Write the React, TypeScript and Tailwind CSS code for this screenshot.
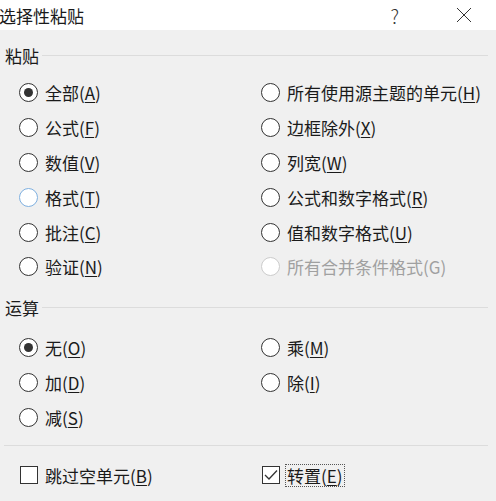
import React from "react";

const font = '"Microsoft YaHei", "Noto Sans CJK SC", "Noto Sans", sans-serif';

function Label({ text, k, disabled }: { text: string; k?: string; disabled?: boolean }) {
  if (!k) return <span>{text}</span>;
  return (
    <span>
      {text}(<span className={disabled ? "" : "underline underline-offset-2 decoration-1"}>{k}</span>)
    </span>
  );
}

function Radio({
  text,
  k,
  checked,
  focus,
  disabled,
}: {
  text: string;
  k: string;
  checked?: boolean;
  focus?: boolean;
  disabled?: boolean;
}) {
  const border = disabled ? "border-[#cccccc]" : focus ? "border-[#7fb0e0]" : "border-[#333333]";
  return (
    <div className="flex h-[34.8px] items-center">
      <div
        className={`flex h-[19px] w-[19px] items-center justify-center rounded-full border bg-white ${border}`}
      >
        {checked && <div className="h-[9px] w-[9px] rounded-full bg-[#333333]" />}
      </div>
      <div className={`ml-[7px] text-[17px] leading-none ${disabled ? "text-[#a0a0a0]" : "text-[#1a1a1a]"}`}>
        <Label text={text} k={k} disabled={disabled} />
      </div>
    </div>
  );
}

function Check({ text, k, checked, focus }: { text: string; k: string; checked?: boolean; focus?: boolean }) {
  return (
    <div className="flex h-[34.8px] items-center">
      <div className="flex h-[18px] w-[18px] items-center justify-center border border-[#333333] bg-white">
        {checked && (
          <svg width="16" height="16" viewBox="0 0 16 16">
            <path d="M2 8 L6 12 L14 3.5" fill="none" stroke="#333333" strokeWidth="1.3" />
          </svg>
        )}
      </div>
      <div
        className={`ml-[6px] px-[1px] py-[2px] text-[17px] leading-none text-[#1a1a1a] ${
          focus ? "outline outline-1 outline-dotted outline-[#555555]" : "outline-none"
        }`}
      >
        <Label text={text} k={k} />
      </div>
    </div>
  );
}

function Header({ text }: { text: string }) {
  return (
    <div className="flex h-[30px] items-center pl-[5px] pr-[8px]">
      <span className="text-[17px] leading-none text-[#1a1a1a]">{text}</span>
      <div className="ml-[3px] h-px flex-1 bg-[#dcdcdc]" />
    </div>
  );
}

export default function App() {
  return (
    <div className="h-[501px] w-[496px] overflow-hidden bg-[#f0f0f0]" style={{ fontFamily: font }}>
      <div className="flex h-[30px] items-center bg-white">
        <span className="ml-[-1px] text-[17px] leading-none text-[#1a1a1a]">选择性粘贴</span>
        <div className="flex-1" />
        <span className="mr-[57px] text-[19px] font-light leading-none text-[#333333]">?</span>
        <svg width="16" height="16" viewBox="0 0 16 16" className="mr-[24px]">
          <path d="M1 1 L15 15 M15 1 L1 15" stroke="#333333" strokeWidth="1" />
        </svg>
      </div>

      <div className="mt-[10px]">
        <Header text="粘贴" />
      </div>
      <div className="mt-[5.6px] grid grid-cols-[242px_1fr] pl-[19px]">
        <Radio text="全部" k="A" checked />
        <Radio text="所有使用源主题的单元" k="H" />
        <Radio text="公式" k="F" />
        <Radio text="边框除外" k="X" />
        <Radio text="数值" k="V" />
        <Radio text="列宽" k="W" />
        <Radio text="格式" k="T" focus />
        <Radio text="公式和数字格式" k="R" />
        <Radio text="批注" k="C" />
        <Radio text="值和数字格式" k="U" />
        <Radio text="验证" k="N" />
        <Radio text="所有合并条件格式(G)" k="" disabled />
      </div>

      <div className="mt-[8.6px]">
        <Header text="运算" />
      </div>
      <div className="mt-[7.6px] grid grid-cols-[242px_1fr] pl-[19px]">
        <Radio text="无" k="O" checked />
        <Radio text="乘" k="M" />
        <Radio text="加" k="D" />
        <Radio text="除" k="I" />
        <Radio text="减" k="S" />
        <div />
      </div>

      <div className="mx-[4px] mr-[8px] mt-[10px] h-px bg-[#dcdcdc]" />

      <div className="mt-[12px] grid grid-cols-[242px_1fr] pl-[20px]">
        <Check text="跳过空单元" k="B" />
        <Check text="转置" k="E" checked focus />
      </div>
    </div>
  );
}
